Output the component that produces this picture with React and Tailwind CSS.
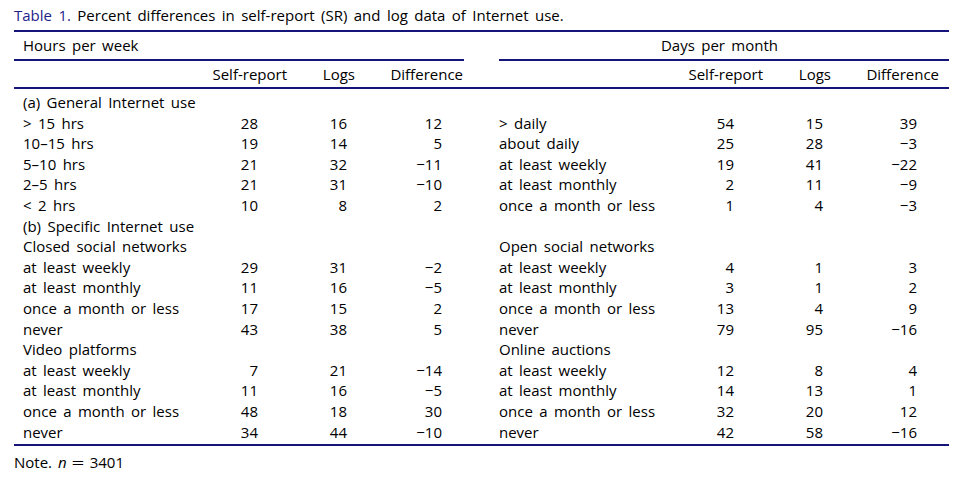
const left = [
  { label: '(a) General Internet use', head: true },
  { label: '> 15 hrs', v: ['28', '16', '12'] },
  { label: '10–15 hrs', v: ['19', '14', '5'] },
  { label: '5–10 hrs', v: ['21', '32', '−11'] },
  { label: '2–5 hrs', v: ['21', '31', '−10'] },
  { label: '< 2 hrs', v: ['10', '8', '2'] },
  { label: '(b) Specific Internet use', head: true },
  { label: 'Closed social networks', head: true },
  { label: 'at least weekly', v: ['29', '31', '−2'] },
  { label: 'at least monthly', v: ['11', '16', '−5'] },
  { label: 'once a month or less', v: ['17', '15', '2'] },
  { label: 'never', v: ['43', '38', '5'] },
  { label: 'Video platforms', head: true },
  { label: 'at least weekly', v: ['7', '21', '−14'] },
  { label: 'at least monthly', v: ['11', '16', '−5'] },
  { label: 'once a month or less', v: ['48', '18', '30'] },
  { label: 'never', v: ['34', '44', '−10'] },
];

const right = [
  { label: '', head: true },
  { label: '> daily', v: ['54', '15', '39'] },
  { label: 'about daily', v: ['25', '28', '−3'] },
  { label: 'at least weekly', v: ['19', '41', '−22'] },
  { label: 'at least monthly', v: ['2', '11', '−9'] },
  { label: 'once a month or less', v: ['1', '4', '−3'] },
  { label: '', head: true },
  { label: 'Open social networks', head: true },
  { label: 'at least weekly', v: ['4', '1', '3'] },
  { label: 'at least monthly', v: ['3', '1', '2'] },
  { label: 'once a month or less', v: ['13', '4', '9'] },
  { label: 'never', v: ['79', '95', '−16'] },
  { label: 'Online auctions', head: true },
  { label: 'at least weekly', v: ['12', '8', '4'] },
  { label: 'at least monthly', v: ['14', '13', '1'] },
  { label: 'once a month or less', v: ['32', '20', '12'] },
  { label: 'never', v: ['42', '58', '−16'] },
];

function Row({ l, r }) {
  return (
    <>
      <div className="pl-[9px] whitespace-nowrap">{l.label}</div>
      <div className="text-right pr-[37px]">{l.v?.[0]}</div>
      <div className="text-right pr-[36px]">{l.v?.[1]}</div>
      <div className="text-right pr-[22px]">{l.v?.[2]}</div>
      <div />
      <div className="whitespace-nowrap">{r.label}</div>
      <div className="text-right pr-[36px]">{r.v?.[0]}</div>
      <div className="text-right pr-[27px]">{r.v?.[1]}</div>
      <div className="text-right pr-[32px]">{r.v?.[2]}</div>
    </>
  );
}

export default function App() {
  return (
    <div className="w-[968px] h-[479px] bg-white text-black font-['Open_Sans',sans-serif] text-[15px] [word-spacing:2.5px] px-[14px]">
      <div className="w-[935px]">
        <div className="h-[30px] pt-[4px] leading-[22px] whitespace-nowrap">
          <span className="text-[#1e1e8a]">Table 1.</span> Percent differences in self-report (SR) and log data of Internet use.
        </div>

        <div className="grid grid-cols-[191px_90px_88px_81px_35px_181px_90px_80px_99px] border-t-2 border-b-2 border-[#14147a]">
          {/* group headers */}
          <div className="col-span-4 h-[29px] flex items-center pl-[9px] border-b-2 border-[#14147a]">Hours per week</div>
          <div />
          <div className="col-span-4 h-[29px] flex items-center justify-center pr-[9px] border-b-2 border-[#14147a]">Days per month</div>

          {/* column headers */}
          <div className="col-span-9 grid grid-cols-subgrid h-[28px] items-center border-b-2 border-[#14147a] mb-[3px]">
            <div />
            <div className="text-right pr-[8px]">Self-report</div>
            <div className="text-right pr-[28px]">Logs</div>
            <div className="text-right pr-[1px]">Difference</div>
            <div />
            <div />
            <div className="text-right pr-[7px]">Self-report</div>
            <div className="text-right pr-[19px]">Logs</div>
            <div className="text-right pr-[10px]">Difference</div>
          </div>

          {left.map((l, i) => (
            <div key={i} className="col-span-9 grid grid-cols-subgrid h-[20.6px] leading-[20.6px]">
              <Row l={l} r={right[i]} />
            </div>
          ))}
          <div className="col-span-9 h-[2px]" />
        </div>

        <div className="h-[32px] flex items-center whitespace-nowrap">
          <span>Note.</span>
          <span className="italic ml-[6px]">n</span>
          <span className="inline-block w-[14px] text-center scale-x-150 ml-[4px]">=</span>
          <span className="ml-[5px]">3401</span>
        </div>
      </div>
    </div>
  );
}
